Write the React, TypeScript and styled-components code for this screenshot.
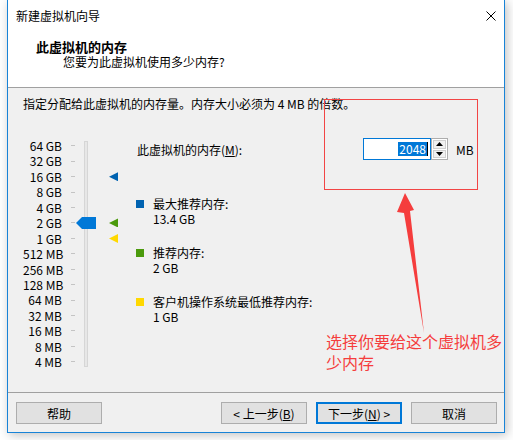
import React from "react";
import styled, { createGlobalStyle } from "styled-components";

const GlobalStyle = createGlobalStyle`
  html, body {
    margin: 0;
    padding: 0;
    background: #ffffff;
  }
  body {
    font-family: "Noto Sans CJK SC", "Noto Sans", sans-serif;
    font-size: 12px;
    color: #000;
  }
`;

const ROW_H = 15.45;

const Page = styled.div`
  position: relative;
  width: 513px;
  height: 440px;
  overflow: hidden;
`;

const Window = styled.div`
  margin-left: 7px;
  width: 498px;
  height: 433px;
  box-sizing: border-box;
  border: 1px solid #1883d7;
  border-top: none;
  display: flex;
  flex-direction: column;
  background: #f0f0f0;
  box-shadow: 2px 2px 10px rgba(0, 0, 0, 0.25);
`;

const TitleBar = styled.div`
  height: 31px;
  flex: none;
  background: #fff;
  display: flex;
  align-items: center;
  justify-content: space-between;
  padding: 0 8px;
  line-height: 15px;
`;

const Header = styled.div`
  height: 57px;
  flex: none;
  box-sizing: border-box;
  background: #fff;
  border-bottom: 1px solid #a0a0a0;
  padding: 8px 0 0 28px;
  line-height: 15px;
`;

const HeaderTitle = styled.div`
  font-size: 13px;
  font-weight: bold;
`;

const HeaderSub = styled.div`
  margin-left: 27px;
`;

const Body = styled.div`
  flex: 1;
  padding: 8px 0 0 15px;
  line-height: 15px;
`;

const MainRow = styled.div`
  display: flex;
  margin-top: 27px;
`;

const Scale = styled.div`
  display: flex;
  flex-direction: column;
`;

const ScaleRow = styled.div`
  height: ${ROW_H}px;
  display: flex;
  align-items: center;
`;

const ScaleLabel = styled.span`
  width: 39px;
  text-align: right;
  white-space: nowrap;
  line-height: ${ROW_H}px;
`;

const Tick = styled.span`
  margin-left: 9px;
  width: 4px;
  height: 1px;
  background: #c4c4c4;
`;

const TrackColumn = styled.div`
  position: relative;
  width: 20px;
  margin-left: 1px;
  display: flex;
  justify-content: center;
`;

const Track = styled.div`
  margin-top: 3px;
  width: 4px;
  height: 226px;
  box-sizing: border-box;
  border: 1px solid #d6d6d6;
  background: #e7e7e7;
`;

const Thumb = styled.div`
  position: absolute;
  left: 0;
  width: 20px;
  height: 12px;
  background: #0078d7;
  clip-path: polygon(0 50%, 6px 0, 100% 0, 100% 100%, 6px 100%);
`;

const MarkerColumn = styled.div`
  position: relative;
  width: 9px;
  margin-left: 13px;
`;

const Marker = styled.div<{ $color: string }>`
  position: absolute;
  left: 0;
  width: 9px;
  height: 9px;
  background: ${(p) => p.$color};
  clip-path: polygon(0 50%, 100% 0, 100% 100%);
`;

const Details = styled.div`
  margin-left: 18px;
  display: flex;
  flex-direction: column;
`;

const MemoryRow = styled.div`
  height: 22px;
  display: flex;
  align-items: center;
`;

const MemoryLabel = styled.span`
  width: 226px;
  padding-left: 1px;
`;

const SpinBox = styled.div`
  display: flex;
  height: 22px;
`;

const SpinInput = styled.div`
  width: 68px;
  box-sizing: border-box;
  border: 1px solid #0078d7;
  background: #fff;
  display: flex;
  align-items: center;
  justify-content: flex-end;
  padding-right: 2px;
`;

const Selected = styled.span`
  background: #0078d7;
  color: #fff;
  line-height: 14px;
  padding: 0 1px;
`;

const Caret = styled.span`
  width: 1px;
  height: 14px;
  background: #000;
`;

const SpinButtons = styled.div`
  width: 17px;
  box-sizing: border-box;
  border: 1px solid #adadad;
  background: #fff;
  padding: 1px;
  display: flex;
  flex-direction: column;
  gap: 1px;
`;

const SpinButton = styled.div`
  flex: 1;
  box-sizing: border-box;
  border: 1px solid #cfcfcf;
  background: #f0f0f0;
  display: flex;
  align-items: center;
  justify-content: center;
`;

const Unit = styled.span`
  margin-left: 8px;
`;

const Legend = styled.div`
  margin-top: 36px;
  display: flex;
  flex-direction: column;
  gap: 19px;
`;

const LegendItem = styled.div`
  display: flex;
  align-items: flex-start;
`;

const Swatch = styled.span<{ $color: string }>`
  width: 8px;
  height: 8px;
  margin-top: 4px;
  background: ${(p) => p.$color};
`;

const LegendText = styled.div`
  margin-left: 9px;
  display: flex;
  flex-direction: column;
`;

const Footer = styled.div`
  height: 40px;
  flex: none;
  box-sizing: border-box;
  border-top: 1px solid #a0a0a0;
  padding: 9px 7px 8px 8px;
  display: flex;
`;

const Spacer = styled.div`
  flex: 1;
`;

const Button = styled.div<{ $primary?: boolean }>`
  width: 86px;
  height: 22px;
  box-sizing: border-box;
  border: ${(p) => (p.$primary ? "2px solid #0078d7" : "1px solid #adadad")};
  background: #e1e1e1;
  display: flex;
  align-items: center;
  justify-content: center;
  line-height: 15px;
  & + & {
    margin-left: 9px;
  }
`;

const Key = styled.span`
  text-decoration: underline;
  text-underline-offset: 1px;
`;

const NoteBox = styled.div`
  position: absolute;
  left: 324px;
  top: 99px;
  width: 154px;
  height: 91px;
  box-sizing: border-box;
  border: 1px solid #f24545;
  pointer-events: none;
`;

const NoteArrow = styled.svg`
  position: absolute;
  left: 0;
  top: 0;
  pointer-events: none;
`;

const NoteText = styled.div`
  position: absolute;
  left: 326px;
  top: 331px;
  width: 180px;
  font-size: 16px;
  line-height: 21px;
  color: #f53d3d;
`;

const scale = [
  "64 GB", "32 GB", "16 GB", "8 GB", "4 GB", "2 GB", "1 GB",
  "512 MB", "256 MB", "128 MB", "64 MB", "32 MB", "16 MB", "8 MB", "4 MB",
];

const markers = [
  { at: 2, color: "#0063b1" },
  { at: 5, color: "#4b9a0c" },
  { at: 6, color: "#ffd800" },
];

const legend = [
  { color: "#0063b1", title: "最大推荐内存:", value: "13.4 GB" },
  { color: "#4b9a0c", title: "推荐内存:", value: "2 GB" },
  { color: "#ffd800", title: "客户机操作系统最低推荐内存:", value: "1 GB" },
];

const centerOf = (i: number) => i * ROW_H + ROW_H / 2;

const App: React.FC = () => {
  return (
    <Page>
      <GlobalStyle />
      <Window>
        <TitleBar>
          <span>新建虚拟机向导</span>
          <svg width="10" height="10" viewBox="0 0 10 10">
            <path d="M0.5 0.5L9.5 9.5M9.5 0.5L0.5 9.5" stroke="#000" strokeWidth="1" />
          </svg>
        </TitleBar>
        <Header>
          <HeaderTitle>此虚拟机的内存</HeaderTitle>
          <HeaderSub>您要为此虚拟机使用多少内存?</HeaderSub>
        </Header>
        <Body>
          <div>指定分配给此虚拟机的内存量。内存大小必须为 4 MB 的倍数。</div>
          <MainRow>
            <Scale>
              {scale.map((s) => (
                <ScaleRow key={s}>
                  <ScaleLabel>{s}</ScaleLabel>
                  <Tick />
                </ScaleRow>
              ))}
            </Scale>
            <TrackColumn>
              <Track />
              <Thumb style={{ top: centerOf(5) - 6 }} />
            </TrackColumn>
            <MarkerColumn>
              {markers.map((m) => (
                <Marker key={m.at} $color={m.color} style={{ top: centerOf(m.at) - 4.5 }} />
              ))}
            </MarkerColumn>
            <Details>
              <MemoryRow>
                <MemoryLabel>
                  此虚拟机的内存(<Key>M</Key>):
                </MemoryLabel>
                <SpinBox>
                  <SpinInput>
                    <Selected>2048</Selected>
                    <Caret />
                  </SpinInput>
                  <SpinButtons>
                    <SpinButton>
                      <svg width="7" height="4" viewBox="0 0 7 4">
                        <path d="M3.5 0L7 4H0Z" fill="#000" />
                      </svg>
                    </SpinButton>
                    <SpinButton>
                      <svg width="7" height="4" viewBox="0 0 7 4">
                        <path d="M0 0H7L3.5 4Z" fill="#000" />
                      </svg>
                    </SpinButton>
                  </SpinButtons>
                </SpinBox>
                <Unit>MB</Unit>
              </MemoryRow>
              <Legend>
                {legend.map((l) => (
                  <LegendItem key={l.title}>
                    <Swatch $color={l.color} />
                    <LegendText>
                      <span>{l.title}</span>
                      <span>{l.value}</span>
                    </LegendText>
                  </LegendItem>
                ))}
              </Legend>
            </Details>
          </MainRow>
        </Body>
        <Footer>
          <Button>帮助</Button>
          <Spacer />
          <Button>
            &lt; 上一步(<Key>B</Key>)
          </Button>
          <Button $primary>
            下一步(<Key>N</Key>) &gt;
          </Button>
          <Button>取消</Button>
        </Footer>
      </Window>

      <NoteBox />
      <NoteArrow width="513" height="440" viewBox="0 0 513 440">
        <polygon
          points="405,193 414,210 410,211 424,333 404,213 397,212"
          fill="#f53d3d"
        />
      </NoteArrow>
      <NoteText>选择你要给这个虚拟机多少内存</NoteText>
    </Page>
  );
};

export default App;
